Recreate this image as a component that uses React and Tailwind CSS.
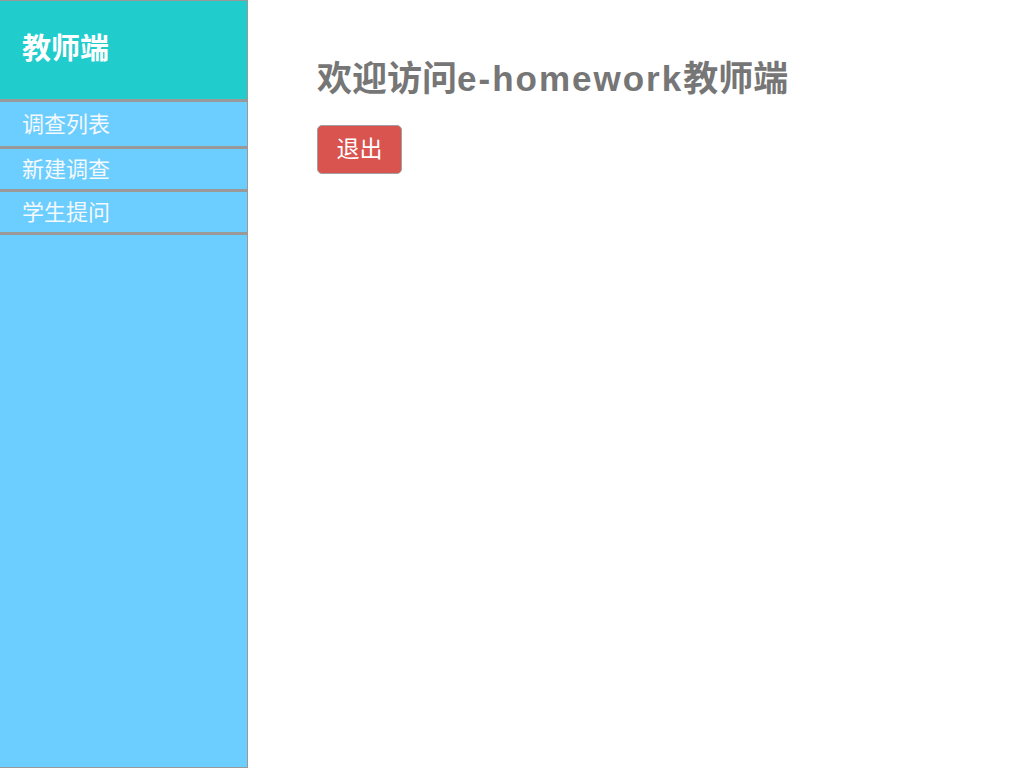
export default function App() {
  const font = { fontFamily: '"Liberation Sans", "Noto Sans CJK SC", sans-serif' };
  return (
    <div className="flex h-[768px] w-[1024px] bg-white" style={font}>
      <div className="flex w-[248px] shrink-0 flex-col border-r border-t border-b border-[#999999] bg-[#6ccdff]">
        <div className="flex h-[98px] items-center bg-[#21cccc] pl-[22px] text-[29px] font-bold text-white">
          教师端
        </div>
        <div className="h-[3px] bg-[#999999]" />
        <div className="flex h-[44px] items-center pl-[22px] text-[22px] text-[#f4f9fd]">调查列表</div>
        <div className="h-[3px] bg-[#999999]" />
        <div className="flex h-[40px] items-center pl-[22px] text-[22px] text-[#f4f9fd]">新建调查</div>
        <div className="h-[3px] bg-[#999999]" />
        <div className="flex h-[40px] items-center pl-[22px] text-[22px] text-[#f4f9fd]">学生提问</div>
        <div className="h-[3px] bg-[#999999]" />
      </div>
      <div className="flex flex-col pl-[69px] pt-[55px]">
        <h1 className="text-[35px] font-bold leading-[48px] text-[#767676]">
          欢迎访问<span className="tracking-[2px]">e-homework</span>教师端
        </h1>
        <div className="mt-[22px]">
          <button className="flex h-[49px] w-[85px] items-center justify-center rounded-[5px] border border-[#a0a0a0] bg-[#d9534f] text-[23px] text-white">
            退出
          </button>
        </div>
      </div>
    </div>
  );
}
